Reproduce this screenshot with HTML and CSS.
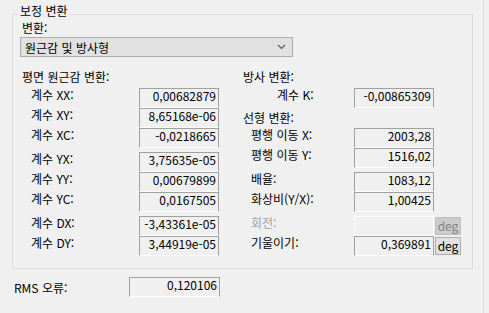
FILE: index.html
```html
<!DOCTYPE html>
<html lang="ko">
<head>
    <meta charset="UTF-8">
    <title>보정 변환</title>
    <link rel="stylesheet" href="styles.css">
</head>
<body>
    <div class="dialog">
        <div class="pane">
            <fieldset class="group">
                <legend>보정 변환</legend>
                <div class="caption">변환:</div>
                <div class="combo">
                    <span>원근감 및 방사형</span>
                    <svg width="9" height="6" viewBox="0 0 9 6"><path d="M1 1 L4.5 4.5 L8 1" fill="none" stroke="#5a5a5a" stroke-width="1.2"/></svg>
                </div>

                <div class="cols">
                    <!-- 평면 원근감 -->
                    <div class="col col-left">
                        <div class="heading">평면 원근감 변환:</div>
                        <div class="block">
                            <div class="row"><span class="lbl">계수 XX:</span><span class="val">0,00682879</span></div>
                            <div class="row"><span class="lbl">계수 XY:</span><span class="val">8,65168e-06</span></div>
                            <div class="row"><span class="lbl">계수 XC:</span><span class="val">-0,0218665</span></div>
                        </div>
                        <div class="block">
                            <div class="row"><span class="lbl">계수 YX:</span><span class="val">3,75635e-05</span></div>
                            <div class="row"><span class="lbl">계수 YY:</span><span class="val">0,00679899</span></div>
                            <div class="row"><span class="lbl">계수 YC:</span><span class="val">0,0167505</span></div>
                        </div>
                        <div class="block">
                            <div class="row"><span class="lbl">계수 DX:</span><span class="val">-3,43361e-05</span></div>
                            <div class="row"><span class="lbl">계수 DY:</span><span class="val">3,44919e-05</span></div>
                        </div>
                    </div>

                    <!-- 방사 / 선형 -->
                    <div class="col col-right">
                        <div class="heading">방사 변환:</div>
                        <div class="row"><span class="lbl lbl-k">계수 K:</span><span class="val">-0,00865309</span></div>
                        <div class="heading heading-sub">선형 변환:</div>
                        <div class="block">
                            <div class="row"><span class="lbl">평행 이동 X:</span><span class="val">2003,28</span></div>
                            <div class="row"><span class="lbl">평행 이동 Y:</span><span class="val">1516,02</span></div>
                        </div>
                        <div class="block">
                            <div class="row"><span class="lbl">배율:</span><span class="val">1083,12</span></div>
                            <div class="row"><span class="lbl">화상비(Y/X):</span><span class="val">1,00425</span></div>
                        </div>
                        <div class="block">
                            <div class="row disabled"><span class="lbl">회전:</span><span class="val"></span><span class="unit">deg</span></div>
                            <div class="row"><span class="lbl">기울이기:</span><span class="val">0,369891</span><span class="unit">deg</span></div>
                        </div>
                    </div>
                </div>
            </fieldset>

            <div class="rms">
                <span class="rms-lbl">RMS 오류:</span>
                <span class="val rms-val">0,120106</span>
            </div>
        </div>
        <div class="edge"></div>
    </div>
</body>
</html>
```

FILE: styles.css
```css
/* 기본 대화상자 배경 */
body {
    margin: 0;
    background: #f0f0f0;
    font-family: "Noto Sans CJK KR", "Liberation Sans", sans-serif;
    font-size: 12px;
    color: #000;
}

.dialog {
    display: flex;
    height: 313px;
}
.pane {
    width: 483px;
}
.edge {
    flex: 1;
    border-left: 1px solid #dcdcdc;
}

/* 그룹 박스 */
.group {
    box-sizing: border-box;
    width: 461px;
    margin: 6px 0 0 12px;
    padding: 0 0 12px 7px;
    border: 1px solid #dcdcdc;
}
.group legend {
    margin-left: -2px;
    padding: 0 2px 6px;
    line-height: 10px;
}

.caption {
    margin-left: 2px;
    line-height: 12px;
}

/* 콤보 박스 */
.combo {
    box-sizing: border-box;
    width: 273px;
    height: 20px;
    margin-top: 3px;
    padding: 0 6px 0 4px;
    display: flex;
    align-items: center;
    justify-content: space-between;
    background: #e1e1e1;
    border: 1px solid #adadad;
}

/* 두 칼럼 */
.cols {
    display: grid;
    grid-template-columns: 223px 1fr;
    margin-top: 13px;
}
.heading {
    line-height: 14px;
    height: 14px;
    margin-bottom: 4px;
}
.col-left .heading {
    margin-left: 2px;
}
.heading-sub {
    margin-top: 3px;
    margin-bottom: 3px;
}

.block + .block {
    margin-top: 4px;
}
.row {
    display: flex;
    height: 20px;
}
.lbl {
    box-sizing: border-box;
    line-height: 14px;
}
.col-left .lbl {
    width: 119px;
    padding-left: 11px;
}
.col-right .lbl {
    width: 111px;
    padding-left: 8px;
}
.col-right .lbl-k {
    padding-left: 34px;
}

/* 값 표시 칸 (오목 테두리) */
.val {
    box-sizing: border-box;
    width: 80px;
    height: 20px;
    padding-right: 2px;
    border: 1px solid #a0a0a0;
    border-bottom-color: #fff;
    text-align: right;
    line-height: 14px;
}

.unit {
    box-sizing: border-box;
    width: 26px;
    height: 18px;
    margin: 1px 0 0 1px;
    border: 1px solid #adadad;
    background: #e1e1e1;
    text-align: center;
    line-height: 15px;
}

.row.disabled .lbl {
    color: #a0a0a0;
}
.row.disabled .val {
    border-color: #fcfcfc;
}
.row.disabled .unit {
    background: #cccccc;
    border-color: #bfbfbf;
    color: #838383;
}

/* RMS */
.rms {
    display: flex;
    align-items: center;
    margin-top: 8px;
    padding-left: 14px;
}
.rms-lbl {
    width: 115px;
}
.rms-val {
    width: 91px;
}
```
